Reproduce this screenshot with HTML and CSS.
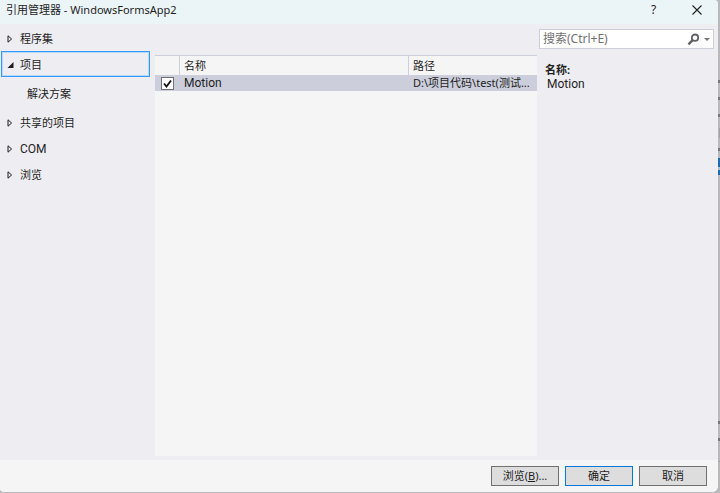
FILE: index.html
```html
<!DOCTYPE html>
<html lang="zh-CN">
<head>
    <meta charset="UTF-8">
    <meta name="viewport" content="width=device-width, initial-scale=1.0">
    <title>引用管理器 - WindowsFormsApp2</title>
    <link rel="stylesheet" href="styles.css">
</head>
<body>
    <!-- edge of the editor window behind the dialog -->
    <svg class="behind" width="2" height="493" viewBox="0 0 2 493" aria-hidden="true">
        <path fill="#77777b" d="M0 80h2v3H0zM0 97h2v3H0zM0 114h2v3H0zM0 148h2v3H0zM0 421h2v3H0zM0 438h2v3H0z"/>
        <path fill="#a2a2a6" d="M1 128h1v10H1zM0 461h2v1H0z"/>
        <path fill="#1c6cb4" d="M0 158h2v9H0zM0 170h2v5H0z"/>
    </svg>

    <div class="dialog" role="dialog" aria-labelledby="dialogTitle">
        <header class="titlebar">
            <h1 id="dialogTitle">引用管理器 - WindowsFormsApp2</h1>
            <button type="button" class="title-button">?</button>
            <button type="button" class="title-button" aria-label="关闭">
                <svg width="10" height="10" viewBox="0 0 10 10"><path d="M.5.5l9 9M9.500.5l-9 9" fill="none" stroke="#222" stroke-width="1.100"/></svg>
            </button>
        </header>

        <div class="content">
            <nav class="tree">
                <button type="button" class="tree-item">
                    <svg class="arrow" viewBox="0 0 7 8"><path d="M1 .8v6.400L4.600 4z"/></svg>程序集
                </button>
                <button type="button" class="tree-item selected">
                    <svg class="arrow open" viewBox="0 0 7 8"><path d="M6.500 1v6H.5z"/></svg>项目
                </button>
                <button type="button" class="tree-item child">解决方案</button>
                <button type="button" class="tree-item">
                    <svg class="arrow" viewBox="0 0 7 8"><path d="M1 .8v6.400L4.600 4z"/></svg>共享的项目
                </button>
                <button type="button" class="tree-item">
                    <svg class="arrow" viewBox="0 0 7 8"><path d="M1 .8v6.400L4.600 4z"/></svg><span class="latin">COM</span>
                </button>
                <button type="button" class="tree-item">
                    <svg class="arrow" viewBox="0 0 7 8"><path d="M1 .8v6.400L4.600 4z"/></svg>浏览
                </button>
            </nav>

            <main class="list">
                <table>
                    <colgroup>
                        <col class="col-check">
                        <col class="col-name">
                        <col class="col-path">
                    </colgroup>
                    <thead>
                        <tr><th></th><th>名称</th><th>路径</th></tr>
                    </thead>
                    <tbody>
                        <tr>
                            <td class="check-cell"><input type="checkbox" id="motion" checked></td>
                            <td><label class="latin" for="motion">Motion</label></td>
                            <td>D:\项目代码\test(测试...</td>
                        </tr>
                    </tbody>
                </table>
            </main>

            <aside class="side">
                <div class="search">
                    <input type="text" placeholder="搜索(Ctrl+E)" aria-label="搜索(Ctrl+E)">
                    <button type="button" class="search-button" aria-label="搜索">
                        <svg width="13" height="13" viewBox="0 0 13 13"><circle cx="8" cy="4.700" r="3.200" fill="none" stroke="#606065" stroke-width="1.800"/><path d="M5.600 7.200L1.500 11.300" stroke="#606065" stroke-width="2.400"/></svg>
                    </button>
                    <button type="button" class="search-button" aria-label="搜索选项">
                        <svg width="6" height="3" viewBox="0 0 6 3"><path d="M0 0h6L3 3z" fill="#77777c"/></svg>
                    </button>
                </div>
                <dl class="details">
                    <dt>名称:</dt>
                    <dd class="latin">Motion</dd>
                </dl>
            </aside>
        </div>

        <footer class="footer">
            <button type="button" class="btn">浏览(<u>B</u>)...</button>
            <button type="button" class="btn default">确定</button>
            <button type="button" class="btn">取消</button>
        </footer>
    </div>
</body>
</html>
```
FILE: styles.css
```css
* {
    box-sizing: border-box;
}
body {
    margin: 0;
    min-height: 100vh;
    display: flex;
    padding: 0 2px 1px 0;
    background-color: #b9b9bc;
    color: #1e1e1e;
    font-family: "Noto Sans", "Noto Sans CJK SC", sans-serif;
    font-size: 11px;
    line-height: 16px;
}
button, input {
    font: inherit;
    color: inherit;
}
button {
    border: none;
    background: none;
    padding: 0;
}
.latin {
    font-family: Roboto, "Noto Sans CJK SC", sans-serif;
    font-size: 12px;
}
.behind {
    position: absolute;
    top: 0;
    right: 0;
}
.dialog {
    flex: 1;
    display: flex;
    flex-direction: column;
    background-color: #eeedf2;
    border-radius: 0 4px 6px 4px;
    overflow: hidden;
}

/* title bar */
.titlebar {
    display: flex;
    align-items: center;
    height: 24px;
    padding: 0 0 4px 6px;
    background-color: #ebf4f7;
}
.titlebar h1 {
    flex: 1;
    margin: 0;
    font-size: 11px;
    font-weight: normal;
}
.title-button {
    width: 43px;
    height: 20px;
    display: flex;
    align-items: center;
    justify-content: center;
    font-size: 12px;
}

.content {
    flex: 1;
    display: grid;
    grid-template-columns: 155px 1fr 181px;
}

/* category tree */
.tree {
    display: flex;
    flex-direction: column;
    padding: 1px 5px 0 1px;
}
.tree-item {
    display: flex;
    align-items: center;
    gap: 6px;
    height: 26px;
    padding: 1px 0 0 5px;
    border: 1px solid transparent;
    text-align: left;
}
.tree-item.selected {
    border: 1px solid #3399ff;
    outline: 1px solid #b5d8fb;
    outline-offset: -2px;
}
.tree-item.child {
    height: 32px;
    padding-left: 25px;
}
.arrow {
    width: 7px;
    height: 8px;
    fill: none;
    stroke: #1e1e1e;
}
.arrow.open {
    fill: #1e1e1e;
    stroke: none;
}

/* project list */
.list {
    margin: 31px 0 4px;
    background-color: #f5f5f5;
}
table {
    width: 100%;
    table-layout: fixed;
    border-collapse: separate;
    border-spacing: 0;
}
.col-check {
    width: 25px;
}
.col-path {
    width: 128px;
}
th, td {
    padding: 0 4px;
    text-align: left;
    font-weight: normal;
    white-space: nowrap;
}
th {
    height: 20px;
    border-top: 1px solid #cccedb;
    border-right: 1px solid #cccedb;
}
th:last-child {
    border-right: none;
}
td {
    height: 16px;
    line-height: 14px;
    background-color: #cccedb;
}
.check-cell {
    padding: 0 0 0 6px;
}
.check-cell input {
    appearance: none;
    display: block;
    width: 13px;
    height: 13px;
    margin: 0;
    border: 1px solid #717171;
    background-color: #fff;
}
.check-cell input:checked {
    background-image: url("data:image/svg+xml,%3Csvg xmlns='http://www.w3.org/2000/svg' viewBox='0 0 11 11'%3E%3Cpath d='M2 5.500l2.500 3L9 2.500' fill='none' stroke='%23111' stroke-width='1.800'/%3E%3C/svg%3E");
}

/* search and details */
.side {
    padding: 5px 4px 0 2px;
}
.search {
    display: flex;
    align-items: center;
    height: 20px;
    padding: 0 3px;
    border: 1px solid #cccedb;
    background-color: #fff;
}
.search input {
    flex: 1;
    min-width: 0;
    padding: 0;
    border: none;
    outline: none;
    background: none;
    font-size: 12px;
}
.search input::placeholder {
    color: #717171;
}
.search-button {
    display: flex;
    margin-left: 4px;
}
.details {
    margin: 14px 0 0 6px;
    line-height: 14px;
}
.details dt {
    font-weight: bold;
}
.details dd {
    margin: 0 0 0 2px;
}

/* buttons */
.footer {
    display: flex;
    justify-content: flex-end;
    gap: 6px;
    padding: 6px 11px;
    background-color: #f5f5f5;
}
.btn {
    width: 68px;
    height: 20px;
    border: 1px solid #707070;
    background-color: #dddddd;
    line-height: 18px;
}
.btn.default {
    border-color: #0078d7;
}
```
